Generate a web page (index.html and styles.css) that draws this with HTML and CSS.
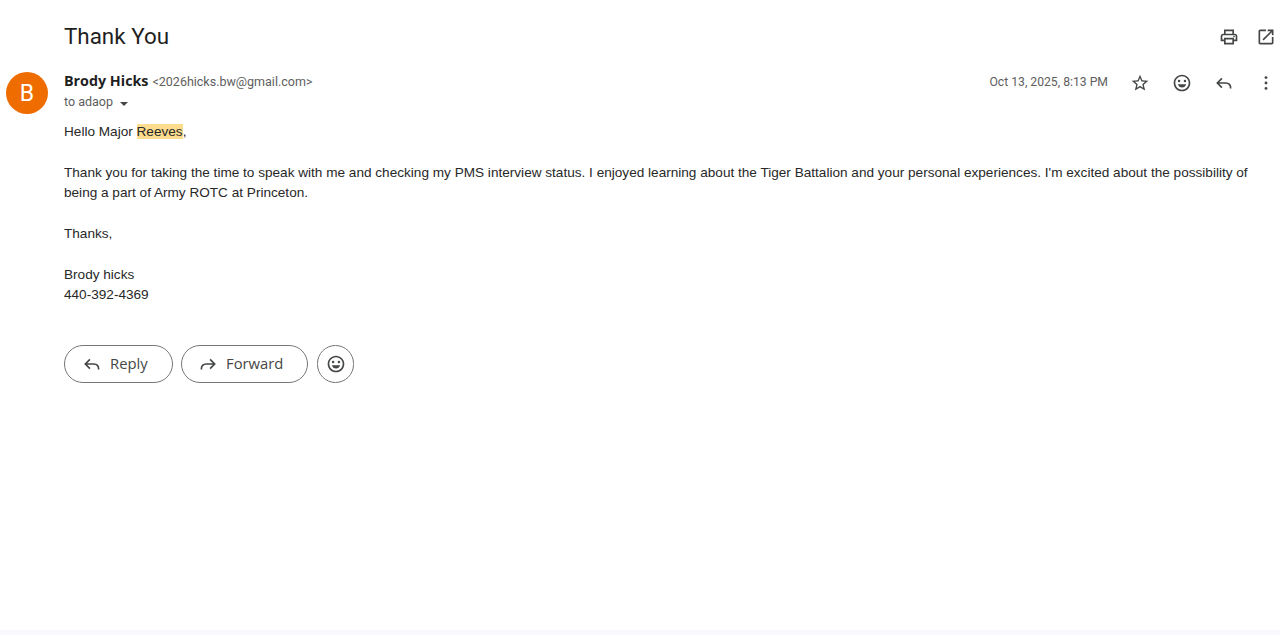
FILE: index.html
```html
<!DOCTYPE html>
<html lang="en">
  <head>
    <meta charset="UTF-8" />
    <meta name="viewport" content="width=device-width, initial-scale=1.0" />
    <title>Thank You</title>
    <link rel="stylesheet" href="styles.css">
  </head>
  <body>
    <div class="page">
      <div class="subject-row">
        <h1 class="subject">Thank You</h1>
        <div class="top-icons">
          <svg class="icon" viewBox="0 0 24 24"><path d="M19 8h-1V3H6v5H5c-1.66 0-3 1.34-3 3v6h4v4h12v-4h4v-6c0-1.66-1.34-3-3-3zM8 5h8v3H8V5zm8 14H8v-4h8v4zm4-4h-2v-2H6v2H4v-4c0-.55.45-1 1-1h14c.55 0 1 .45 1 1v4z"/><circle cx="18" cy="11.5" r="1"/></svg>
          <svg class="icon" viewBox="0 0 24 24"><path d="M19 19H5V5h7V3H5c-1.11 0-2 .9-2 2v14c0 1.1.89 2 2 2h14c1.1 0 2-.9 2-2v-7h-2v7zM14 3v2h3.59l-9.83 9.83 1.41 1.41L19 6.41V10h2V3h-7z"/></svg>
        </div>
      </div>

      <div class="message">
        <div class="avatar">B</div>
        <div class="message-main">
          <div class="message-head">
            <div class="sender">
              <div class="from"><span class="name">Brody Hicks</span> <span class="email">&lt;2026hicks.bw@gmail.com&gt;</span></div>
              <div class="to">to adaop <span class="caret"></span></div>
            </div>
            <div class="meta">
              <span class="date">Oct 13, 2025, 8:13 PM</span>
              <div class="meta-icons">
                <svg class="icon" viewBox="0 0 24 24"><path d="M22 9.24l-7.19-.62L12 2 9.19 8.63 2 9.24l5.46 4.73L5.82 21 12 17.27 18.18 21l-1.63-7.03L22 9.24zM12 15.4l-3.76 2.27 1-4.28-3.32-2.88 4.38-.38L12 6.1l1.71 4.04 4.38.38-3.32 2.88 1 4.28L12 15.4z"/></svg>
                <svg class="icon" viewBox="0 0 24 24"><path d="M11.99 2C6.47 2 2 6.48 2 12s4.47 10 9.99 10C17.52 22 22 17.52 22 12S17.52 2 11.99 2zM12 20c-4.42 0-8-3.58-8-8s3.58-8 8-8 8 3.58 8 8-3.58 8-8 8z"/><circle cx="8.5" cy="9.5" r="1.5"/><circle cx="15.5" cy="9.5" r="1.5"/><path d="M7 13.5h10c-.6 2.4-2.6 4-5 4s-4.400-1.600-5-4z"/></svg>
                <svg class="icon icon-line" viewBox="0 0 24 24"><path d="M9.500 6.500 4 12l5.500 5.500M4 12h10c4 0 6 2.500 6 6.500"/></svg>
                <svg class="icon" viewBox="0 0 24 24"><circle cx="12" cy="5.500" r="1.700"/><circle cx="12" cy="12" r="1.700"/><circle cx="12" cy="18.500" r="1.700"/></svg>
              </div>
            </div>
          </div>

          <div class="body-text">
            <p>Hello Major <mark>Reeves</mark>,</p>
            <p>Thank you for taking the time to speak with me and checking my PMS interview status. I enjoyed learning about the Tiger Battalion and your personal experiences. I'm excited about the possibility of being a part of Army ROTC at Princeton.</p>
            <p>Thanks,</p>
            <p>Brody hicks<br />440-392-4369</p>
          </div>

          <div class="actions">
            <button class="pill reply">
              <svg class="icon icon-line" viewBox="0 0 24 24"><path d="M9.500 6.500 4 12l5.500 5.500M4 12h10c4 0 6 2.500 6 6.500"/></svg>
              <span class="pill-label">Reply</span>
            </button>
            <button class="pill forward">
              <svg class="icon icon-line" viewBox="0 0 24 24"><path d="M14.500 6.500 20 12l-5.500 5.500M20 12H10c-4 0-6 2.500-6 6.500"/></svg>
              <span class="pill-label">Forward</span>
            </button>
            <button class="round">
              <svg class="icon" viewBox="0 0 24 24"><path d="M11.990 2C6.470 2 2 6.480 2 12s4.470 10 9.990 10C17.520 22 22 17.520 22 12S17.520 2 11.990 2zM12 20c-4.420 0-8-3.580-8-8s3.580-8 8-8 8 3.580 8 8-3.580 8-8 8z"/><circle cx="8.500" cy="9.500" r="1.500"/><circle cx="15.500" cy="9.500" r="1.500"/><path d="M7 13.500h10c-.6 2.400-2.600 4-5 4s-4.400-1.600-5-4z"/></svg>
            </button>
          </div>
        </div>
      </div>
    </div>
    <div class="footer-strip"></div>
  </body>
</html>
```

FILE: styles.css
```css
html,
body {
  height: 100%;
}
body {
  margin: 0;
  display: flex;
  flex-direction: column;
  font-family: "Liberation Sans", Arial, sans-serif;
  color: #222;
  background: #fff;
  overflow: hidden;
}
.page {
  flex: 1;
}
.footer-strip {
  height: 5px;
  background-color: #f8f9fd;
}
.icon {
  display: block;
  width: 20px;
  height: 20px;
  fill: #444746;
}
.icon-line {
  fill: none;
  stroke: #444746;
  stroke-width: 2;
}
.subject-row {
  display: flex;
  justify-content: space-between;
  align-items: flex-start;
  padding: 21px 4px 0 64px;
  height: 32px;
}
.subject {
  margin: 0;
  font-family: Roboto, sans-serif;
  font-size: 22.400px;
  font-weight: 400;
  line-height: 30px;
  color: #1f1f1f;
}
.top-icons {
  display: flex;
  gap: 17px;
  margin-top: 6px;
}
.message {
  display: flex;
  padding: 19px 0 0 6px;
}
.avatar {
  flex: none;
  width: 42px;
  height: 42px;
  margin-right: 16px;
  border-radius: 50%;
  background-color: #ef6c00;
  color: #fff;
  font-family: Roboto, sans-serif;
  font-size: 23px;
  line-height: 44px;
  text-align: center;
}
.message-main {
  flex: 1;
  min-width: 0;
}
.message-head {
  display: flex;
  justify-content: space-between;
  padding-right: 4px;
}
.from {
  height: 20px;
  margin-top: -1px;
  line-height: 20px;
  font-family: Roboto, sans-serif;
}
.name {
  font-family: "Open Sans", sans-serif;
  font-size: 14.300px;
  font-weight: 700;
  color: #1f1f1f;
}
.email {
  font-size: 12.500px;
  color: #5e5e5e;
}
.to {
  margin-top: 1px;
  font-family: Roboto, sans-serif;
  font-size: 12.500px;
  line-height: 20px;
  color: #5e5e5e;
}
.caret {
  display: inline-block;
  margin: 2px 0 0 4px;
  border-left: 4.500px solid transparent;
  border-right: 4.500px solid transparent;
  border-top: 4.500px solid #444746;
  vertical-align: middle;
}
.meta {
  display: flex;
  align-items: flex-start;
}
.date {
  font-family: Roboto, sans-serif;
  font-size: 12.200px;
  line-height: 20px;
  color: #5e5e5e;
}
.meta-icons {
  display: flex;
  gap: 22px;
  margin: 1px 0 0 22px;
}
.body-text {
  padding: 10px 30px 0 0;
  font-size: 13.600px;
  line-height: 20.400px;
  color: #282828;
}
.body-text p {
  margin: 0 0 20.400px;
}
mark {
  background-color: #fddc8e;
  color: inherit;
}
.actions {
  display: flex;
  gap: 8px;
  margin-top: 39px;
}
.pill,
.round {
  display: flex;
  align-items: center;
  height: 38px;
  padding: 0;
  background: #fff;
  border: 1px solid #747775;
  border-radius: 19px;
  font-family: "Open Sans", sans-serif;
  font-size: 14.800px;
  font-weight: 500;
  color: #444746;
}
.pill {
  gap: 8px;
  padding-left: 17px;
}
.pill-label {
  margin-top: -2px;
}
.reply {
  width: 109px;
}
.forward {
  width: 127px;
  padding-left: 16px;
}
.round {
  justify-content: center;
  width: 37px;
  margin-left: 1px;
}
```
